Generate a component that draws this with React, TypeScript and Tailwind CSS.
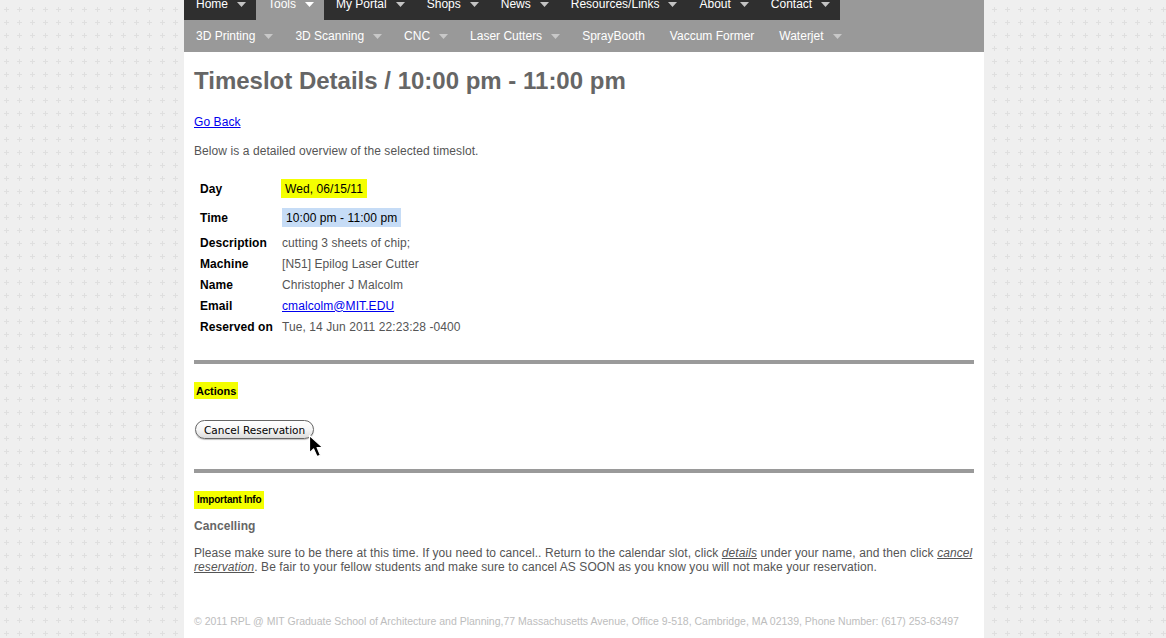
const topNav = [
  { label: "Home", arrow: true },
  { label: "Tools", arrow: true, active: true },
  { label: "My Portal", arrow: true },
  { label: "Shops", arrow: true },
  { label: "News", arrow: true },
  { label: "Resources/Links", arrow: true },
  { label: "About", arrow: true },
  { label: "Contact", arrow: true },
];

const subNav = [
  { label: "3D Printing", arrow: true },
  { label: "3D Scanning", arrow: true },
  { label: "CNC", arrow: true },
  { label: "Laser Cutters", arrow: true },
  { label: "SprayBooth", arrow: false },
  { label: "Vaccum Former", arrow: false },
  { label: "Waterjet", arrow: true },
];

function Caret({ color }: { color: string }) {
  return (
    <svg width="9" height="5" viewBox="0 0 9 5" className="ml-[9px] shrink-0">
      <path d="M0 0 H9 L4.5 5 Z" fill={color} />
    </svg>
  );
}

function DetailRow({ label, children, tall }: { label: string; children: React.ReactNode; tall?: boolean }) {
  return (
    <div className={`flex items-center ${tall ? "h-[29px]" : "h-[21px]"}`}>
      <div className="w-[88px] pl-[6px] font-bold text-black">{label}</div>
      <div className="text-[#555]">{children}</div>
    </div>
  );
}

export default function App() {
  return (
    <div className="min-h-screen w-full bg-[#efefef] pl-[2px] [background-image:linear-gradient(to_right,#efefef_4px,transparent_4px,transparent_9px,#efefef_9px),linear-gradient(to_bottom,#efefef_4px,transparent_4px,transparent_9px,#efefef_9px),linear-gradient(to_bottom,transparent_6px,#dfdfdf_6px,#dfdfdf_7px,transparent_7px),linear-gradient(to_right,transparent_6px,#dfdfdf_6px,#dfdfdf_7px,transparent_7px)] [background-size:13px_13px] [background-position:0_3px] font-['Liberation_Sans',Arial,sans-serif]">
      <div className="mx-auto min-h-screen w-[800px] bg-white">
        {/* Top nav (page scrolled, top part cut off) */}
        <div className="h-[20px] overflow-hidden bg-[#999]">
          <div className="-mt-[12px] flex h-[32px] w-fit bg-[#2f2f2f]">
            {topNav.map((item) => (
              <div
                key={item.label}
                className={`flex h-full items-center pl-[12px] pr-[10px] text-[12px] text-white ${item.active ? "bg-[#999]" : ""}`}
              >
                <span>{item.label}</span>
                {item.arrow && <Caret color={item.active ? "#ffffff" : "#c4c4c4"} />}
              </div>
            ))}
          </div>
        </div>

        {/* Sub nav */}
        <div className="flex h-[32px] bg-[#999]">
          {subNav.map((item) => (
            <div
              key={item.label}
              className={`flex h-full items-center pl-[12px] text-[12px] text-white ${item.arrow ? "pr-[10px]" : "pr-[13px]"}`}
            >
              <span>{item.label}</span>
              {item.arrow && <Caret color="#c8c8c8" />}
            </div>
          ))}
        </div>

        {/* Content */}
        <div className="px-[10px] pt-[15px] text-[12px] leading-[14px] tracking-[0.08px] text-[#555]">
          <h1 className="text-[24px] font-bold leading-[28px] tracking-normal text-[#666]">
            Timeslot Details / 10:00 pm - 11:00 pm
          </h1>

          <a href="#" className="mt-[20px] block w-fit text-[#0000ee] underline">
            Go Back
          </a>

          <p className="mt-[15px]">Below is a detailed overview of the selected timeslot.</p>

          <div className="mt-[16px]">
            <DetailRow label="Day" tall>
              <span className="-ml-[1px] flex h-[19px] items-center bg-[#f4ff00] px-[4px] text-black">Wed, 06/15/11</span>
            </DetailRow>
            <DetailRow label="Time" tall>
              <span className="flex h-[19px] items-center bg-[#c6dcf6] px-[4px] text-black">10:00 pm - 11:00 pm</span>
            </DetailRow>
            <DetailRow label="Description">cutting 3 sheets of chip;</DetailRow>
            <DetailRow label="Machine">[N51] Epilog Laser Cutter</DetailRow>
            <DetailRow label="Name">Christopher J Malcolm</DetailRow>
            <DetailRow label="Email">
              <a href="#" className="text-[#0000ee] underline">cmalcolm@MIT.EDU</a>
            </DetailRow>
            <DetailRow label="Reserved on">Tue, 14 Jun 2011 22:23:28 -0400</DetailRow>
          </div>

          <div className="mt-[23px] h-[4px] bg-[#9a9a9a]" />

          <div className="mt-[18px] flex h-[17px] w-fit items-center bg-[#f4ff00] px-[2px] text-[11px] font-bold tracking-normal text-black">
            Actions
          </div>

          <div className="relative mt-[21px] h-[19px]">
            <button className="ml-[1px] flex h-[19px] items-center rounded-full border border-[#666] bg-linear-to-b from-white via-[#f6f6f6] to-[#dcdcdc] px-[8px] font-['DejaVu_Sans',sans-serif] text-[10.5px] tracking-normal text-black shadow-[0_1px_1px_rgba(0,0,0,0.25)]">
              Cancel Reservation
            </button>
            {/* mouse cursor */}
            <svg width="19" height="25" viewBox="0 0 19 25" className="absolute left-[114px] top-[14px]">
              <path d="M1.5 1.5 L1.5 19 L5.6 15 L9 22.6 L12.4 21.2 L9.1 13.6 L14.8 13.6 Z" fill="#000" stroke="#fff" strokeWidth="1.2" strokeLinejoin="round" />
            </svg>
          </div>

          <div className="mt-[30px] h-[4px] bg-[#9a9a9a]" />

          <div className="mt-[18px] flex h-[18px] w-fit items-center bg-[#f4ff00] px-[3px] text-[10px] font-bold tracking-[-0.2px] text-black">
            Important Info
          </div>

          <h3 className="mt-[10px] font-bold text-[#666]">Cancelling</h3>

          <p className="mt-[13px]">
            Please make sure to be there at this time. If you need to cancel.. Return to the calendar slot, click{" "}
            <span className="italic underline">details</span> under your name, and then click{" "}
            <span className="italic underline">cancel reservation</span>. Be fair to your fellow students and make sure to cancel AS SOON as you know you will not make your reservation.
          </p>

          <p className="mt-[41px] pb-[10px] text-[10.5px] leading-[12px] tracking-normal text-[#bdbdbd]">
            © 2011 RPL @ MIT Graduate School of Architecture and Planning,77 Massachusetts Avenue, Office 9-518, Cambridge, MA 02139, Phone Number: (617) 253-63497
          </p>
        </div>
      </div>
    </div>
  );
}
